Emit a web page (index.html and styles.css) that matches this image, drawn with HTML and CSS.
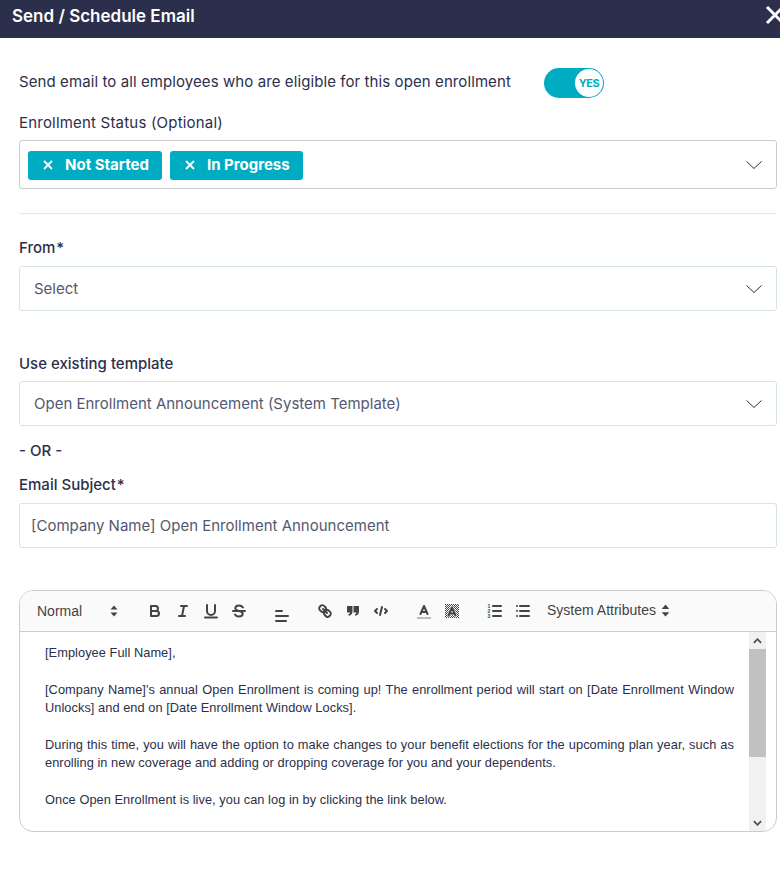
FILE: index.html
```html
<!DOCTYPE html>
<html lang="en">
<head>
    <meta charset="UTF-8">
    <meta name="viewport" content="width=device-width, initial-scale=1.0">
    <title>Send / Schedule Email</title>
    <link rel="stylesheet" href="styles.css">
</head>
<body>
    <header class="modal-header">
        <h1>Send / Schedule Email</h1>
        <svg class="close-icon" viewBox="0 0 20 20"><path d="M2 2l16 16M18 2L2 18"/></svg>
    </header>

    <div class="modal-body">
        <div class="eligible-row">
            <span class="text">Send email to all employees who are eligible for this open enrollment</span>
            <div class="toggle"><span class="toggle-thumb">YES</span></div>
        </div>

        <label class="field-label status-label">Enrollment Status (Optional)</label>
        <div class="multi-select">
            <span class="tag"><svg viewBox="0 0 10 10"><path d="M1 1l8 8M9 1L1 9"/></svg>Not Started</span>
            <span class="tag"><svg viewBox="0 0 10 10"><path d="M1 1l8 8M9 1L1 9"/></svg>In Progress</span>
            <svg class="chevron" viewBox="0 0 16 8"><path d="M0.5 0.5L8 7.5L15.5 0.5"/></svg>
        </div>

        <hr class="divider">

        <label class="field-label">From<span class="req">*</span></label>
        <div class="select">
            <span>Select</span>
            <svg class="chevron" viewBox="0 0 16 8"><path d="M0.5 0.5L8 7.5L15.5 0.5"/></svg>
        </div>

        <label class="field-label template-label">Use existing template</label>
        <div class="select">
            <span>Open Enrollment Announcement (System Template)</span>
            <svg class="chevron" viewBox="0 0 16 8"><path d="M0.5 0.5L8 7.5L15.5 0.5"/></svg>
        </div>

        <div class="or-text">- OR -</div>

        <label class="field-label">Email Subject<span class="req">*</span></label>
        <div class="select subject-input">[Company Name] Open Enrollment Announcement</div>

        <div class="editor">
            <div class="toolbar">
                <span class="picker">Normal
                    <svg class="updown" viewBox="0 0 8 12"><path d="M4 0.5L7.5 4.5H0.5zM4 11.5L0.5 7.5H7.5z"/></svg>
                </span>
                <span class="tool-group">
                    <button><svg viewBox="0 0 18 18"><path d="M5 4h4.5a2.5 2.5 0 0 1 0 5H5zM5 9h5.5a2.5 2.5 0 0 1 0 5H5z"/></svg></button>
                    <button><svg viewBox="0 0 18 18"><path d="M7 4h6M5 14h6M10 4L8 14"/></svg></button>
                    <button><svg viewBox="0 0 18 18"><path d="M5 3v6a4 4 0 0 0 8 0V3M3 15.5h12"/></svg></button>
                    <button><svg viewBox="0 0 18 18"><path d="M3 9h12M13 5.5C12 4 10.5 3.5 9 3.5c-2 0-3.7 1-3.7 2.8C5.300 8 7 8.600 9 9c2 .4 3.700 1 3.700 2.700 0 1.800-1.700 2.800-3.700 2.800-1.700 0-3.200-.6-4-2"/></svg></button>
                </span>
                <span class="tool-group">
                    <button class="align-btn"><svg viewBox="0 0 18 18"><path d="M3 4h6M3 9h12M3 14h10"/></svg></button>
                </span>
                <span class="tool-group">
                    <button><svg viewBox="0 0 18 18"><path d="M7 7l4 4M8.900 4.577a3.476 3.476 0 0 1 .36 4.679A3.476 3.476 0 0 1 4.577 8.900C3.185 7.500 2.035 6.400 4.217 4.217S7.500 3.185 8.900 4.577zM13.423 9.100a3.476 3.476 0 0 0-4.679-.36 3.476 3.476 0 0 0 .36 4.679c1.392 1.392 2.500 2.542 4.679.36S14.815 10.500 13.423 9.100z"/></svg></button>
                    <button><svg viewBox="0 0 18 18"><path class="solid" d="M3 4h5.500v5.500c0 2.300-1.200 3.800-3.600 4.200l-.7-1.400c1.100-.3 1.700-1 1.800-1.900H3zM9.500 4H15v5.500c0 2.300-1.200 3.800-3.600 4.200l-.7-1.400c1.100-.3 1.700-1 1.800-1.900H9.500z"/></svg></button>
                    <button><svg viewBox="0 0 18 18"><path d="M5 7L3 9l2 2M13 7l2 2-2 2M10 5L8 13"/></svg></button>
                </span>
                <span class="tool-group">
                    <button><svg viewBox="0 0 18 18"><path d="M5.500 12L9 4l3.500 8M6.400 10h5.200"/><path class="grey-line" d="M3 16h12"/></svg></button>
                    <button><svg viewBox="0 0 18 18">
                        <defs><pattern id="hatch" width="2" height="2" patternUnits="userSpaceOnUse"><path class="solid" d="M0 0h1v1H0zM1 1h1v1H1z"/></pattern></defs>
                        <rect x="2" y="2" width="14" height="14" fill="url(#hatch)" stroke="none"/>
                        <path class="halo" d="M5.500 13.500L9 5.500l3.500 8M6.400 11.500h5.200"/>
                        <path d="M5.500 13.500L9 5.500l3.500 8M6.400 11.500h5.200"/></svg></button>
                </span>
                <span class="tool-group">
                    <button><svg viewBox="0 0 18 18"><path d="M7 4h8M7 9h8M7 14h8"/><text x="1.500" y="6" class="num">1</text><text x="1.500" y="11" class="num">2</text><text x="1.500" y="16" class="num">3</text></svg></button>
                    <button><svg viewBox="0 0 18 18"><path d="M6 4h9M6 9h9M6 14h9M3 4h.01M3 9h.01M3 14h.01"/></svg></button>
                </span>
                <span class="attrs">System Attributes
                    <svg class="updown" viewBox="0 0 8 12"><path d="M4 0.500L7.500 4.500H0.500zM4 11.500L0.500 7.500H7.500z"/></svg>
                </span>
            </div>
            <div class="editor-body">
                <div class="editor-text">
                    <p>[Employee Full Name],</p>
                    <p><br></p>
                    <p>[Company Name]'s annual Open Enrollment is coming up! The enrollment period will start on [Date Enrollment Window Unlocks] and end on [Date Enrollment Window Locks].</p>
                    <p><br></p>
                    <p>During this time, you will have the option to make changes to your benefit elections for the upcoming plan year, such as enrolling in new coverage and adding or dropping coverage for you and your dependents.</p>
                    <p><br></p>
                    <p>Once Open Enrollment is live, you can log in by clicking the link below.</p>
                </div>
                <div class="scrollbar">
                    <svg class="scroll-arrow" viewBox="0 0 10 6"><path d="M1 5l4-4 4 4"/></svg>
                    <div class="scroll-thumb"></div>
                    <svg class="scroll-arrow bottom" viewBox="0 0 10 6"><path d="M1 1l4 4 4-4"/></svg>
                </div>
            </div>
        </div>
    </div>
</body>
</html>
```

FILE: styles.css
```css
body {
    font-family: 'Inter', 'Noto Sans', sans-serif;
    background-color: white;
    color: #2b2f4b;
    margin: 0;
    padding: 0;
    overflow: hidden;
}

.modal-header {
    height: 38px;
    background-color: #2b2f4b;
    display: flex;
    justify-content: space-between;
    align-items: center;
    padding-left: 12px;
    overflow: hidden;
}

.modal-header h1 {
    color: white;
    font-size: 17px;
    font-weight: 600;
    margin: 0 0 7px;
}

.close-icon {
    width: 20px;
    height: 20px;
    margin-right: -5px;
    margin-bottom: 8px;
    flex: none;
}

.close-icon path {
    stroke: white;
    stroke-width: 3;
    fill: none;
}

.modal-body {
    padding: 30px 3px 0 19px;
}

.eligible-row {
    display: flex;
    align-items: center;
    height: 30px;
}

.text {
    font-size: 15px;
    letter-spacing: 0.09px;
    width: 525px;
    padding-bottom: 3px;
}

.toggle {
    width: 60px;
    height: 30px;
    border-radius: 15px;
    background-color: #00acc1;
    display: flex;
    justify-content: flex-end;
    align-items: center;
    padding-right: 1px;
    box-sizing: border-box;
}

.toggle-thumb {
    width: 28px;
    height: 28px;
    border-radius: 50%;
    background-color: white;
    color: #00acc1;
    font-size: 11px;
    font-weight: 700;
    letter-spacing: -0.5px;
    display: flex;
    justify-content: center;
    align-items: center;
}

.field-label {
    display: block;
    font-size: 15px;
    font-weight: 500;
    line-height: 18px;
    margin-bottom: 9px;
}

.status-label {
    margin-top: 16px;
    margin-bottom: 8px;
    font-weight: 400;
    letter-spacing: 0.2px;
}

.template-label {
    margin-top: 44px;
    margin-bottom: 8px;
}

.req {
    margin-left: 1px;
}

.multi-select {
    height: 49px;
    box-sizing: border-box;
    border: 1px solid #ccc;
    border-radius: 3px;
    display: flex;
    align-items: center;
    gap: 8px;
    padding: 1px 14px 0 8px;
}

.tag {
    height: 29px;
    box-sizing: border-box;
    background-color: #00acc1;
    color: white;
    font-size: 15px;
    font-weight: 700;
    border-radius: 3px;
    display: flex;
    align-items: center;
    padding: 0 13px 1px 15px;
}

.tag svg {
    width: 10px;
    height: 10px;
    margin-right: 12px;
}

.tag path {
    stroke: white;
    stroke-width: 1.800;
    fill: none;
}

.chevron {
    width: 16px;
    height: 8px;
    margin-left: auto;
    flex: none;
}

.chevron path {
    stroke: #2b2f4b;
    stroke-width: 1;
    fill: none;
}

.divider {
    border: none;
    border-top: 1px solid #e8e8e8;
    margin: 24px 0 25px;
}

.select {
    height: 45px;
    box-sizing: border-box;
    border: 1px solid #d6e2ea;
    border-radius: 3px;
    display: flex;
    align-items: center;
    padding: 0 14px;
    font-size: 15px;
    color: #555870;
}

.subject-input {
    padding: 0 11px;
}

.or-text {
    font-size: 15px;
    font-weight: 500;
    line-height: 18px;
    margin: 16px 0 16px;
}

.editor {
    margin-top: 42px;
    height: 242px;
    box-sizing: border-box;
    border: 1px solid #ccc;
    border-radius: 14px;
    overflow: hidden;
    font-family: 'Liberation Sans', Arial, sans-serif;
}

.toolbar {
    height: 41px;
    box-sizing: border-box;
    background-color: #fafafa;
    border-bottom: 1px solid #ccc;
    display: flex;
    align-items: center;
    padding-left: 8px;
    color: #444;
}

.picker {
    width: 98px;
    box-sizing: border-box;
    padding: 0 8px 0 9px;
    font-size: 14px;
    display: flex;
    justify-content: space-between;
    align-items: center;
    margin-right: 15px;
}

.updown {
    width: 8px;
    height: 12px;
    flex: none;
}

.updown path {
    fill: #444;
}

.tool-group {
    display: flex;
    margin-right: 15px;
}

.tool-group button {
    width: 28px;
    height: 24px;
    padding: 3px 5px;
    border: none;
    background: none;
}

.tool-group svg {
    display: block;
    width: 18px;
    height: 18px;
}

.tool-group path {
    stroke: #444;
    stroke-width: 2;
    stroke-linecap: round;
    stroke-linejoin: round;
    fill: none;
}

.tool-group path.solid {
    fill: #444;
    stroke: none;
}

.tool-group path.grey-line {
    stroke: #bbb;
    stroke-linecap: square;
}

.tool-group path.halo {
    stroke: white;
    stroke-width: 3.500;
    opacity: 0.7;
}

.tool-group .num {
    font-size: 5px;
    font-weight: 700;
    fill: #444;
}

.tool-group .align-btn svg {
    transform: translateY(5px);
}

.attrs {
    font-size: 14px;
    display: flex;
    align-items: center;
    gap: 5px;
    margin-left: -5px;
    padding-bottom: 2px;
    white-space: nowrap;
}

.attrs .updown {
    width: 9px;
    height: 13px;
}

.editor-body {
    height: 199px;
    display: flex;
    padding-right: 10px;
    overflow: hidden;
}

.editor-text {
    flex: 1;
    padding: 12px 15px 0 25px;
    font-size: 12.800px;
    letter-spacing: 0.05px;
    line-height: 18.400px;
    color: #2b2f4b;
    text-align: justify;
}

.editor-text p {
    margin: 0;
}

.scrollbar {
    width: 17px;
    flex: none;
    background-color: #f1f1f1;
    position: relative;
    padding-top: 17px;
    box-sizing: border-box;
}

.scroll-thumb {
    height: 108px;
    background-color: #c1c1c1;
}

.scroll-arrow {
    position: absolute;
    top: 6px;
    left: 4px;
    width: 9px;
    height: 6px;
}

.scroll-arrow.bottom {
    top: auto;
    bottom: 5px;
}

.scroll-arrow path {
    stroke: #505050;
    stroke-width: 2;
    fill: none;
}
```
